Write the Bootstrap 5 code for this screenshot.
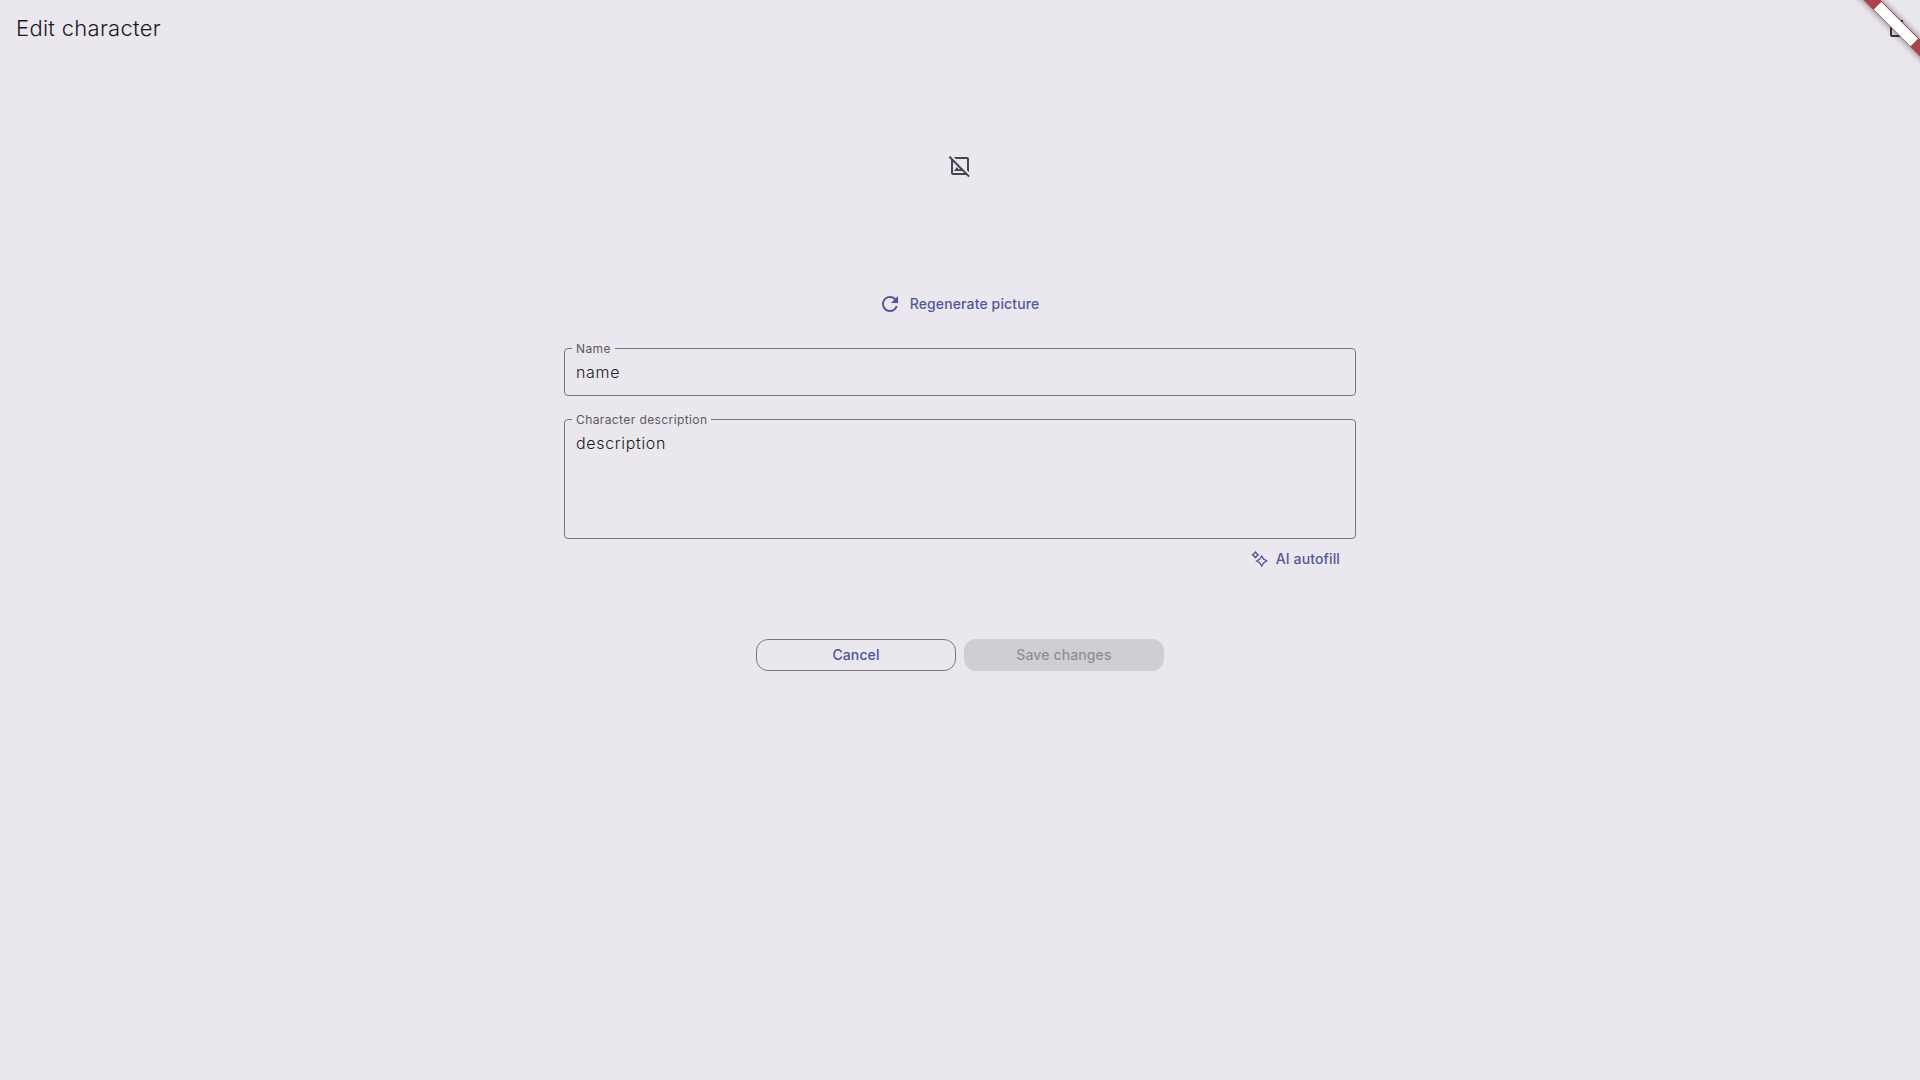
<!DOCTYPE html>
<html lang="en">
<head>
<meta charset="utf-8">
<title>Edit character</title>
<link href="https://cdn.jsdelivr.net/npm/bootstrap@5.3.0/dist/css/bootstrap.min.css" rel="stylesheet">
<style>
body{background:#eae7ee;color:#1b1b1f;font-family:Inter,"Liberation Sans",sans-serif;height:100vh}
.topbar{height:56px;padding:0 12px 0 16px}
.page-title{font-size:22px;font-weight:360;line-height:28px;letter-spacing:.29px}
.form-col{width:792px}
.portrait{height:220px}
.text-action{color:#54569c;font-size:14px;font-weight:480;letter-spacing:.13px;line-height:20px;padding:0;border:0;background:none}
.regen{margin-top:16px;padding-right:3px}
.autofill{margin-top:10px}
.outlined{border:1px solid #777680;border-radius:4px;position:relative}
.outlined label{position:absolute;left:7px;top:-8px;padding:0 4px;font-size:12px;line-height:16px;letter-spacing:.4px;color:#5a5962;background:#eae7ee}
.outlined .form-control{background:transparent;border:0;box-shadow:none;font-size:16px;font-weight:360;line-height:24px;letter-spacing:.66px;color:#1b1b1f;padding:11px;resize:none}
.name-field{height:48px;margin-top:32px}
.desc-field{height:120px;margin-top:23px}
.form-actions{margin-top:70px}
.pill{width:200px;height:32px;border-radius:12px;padding:0;font-size:14px;font-weight:480;letter-spacing:.12px;line-height:20px}
.pill-cancel,.pill-cancel:hover{color:#4f51a0;border:1px solid #777680}
.pill-save,.pill-save:disabled{color:#8f8d94;background:#d0cdd4;border:0;opacity:1}
.ribbon{position:absolute;top:0;right:0}
</style>
</head>
<body class="position-relative overflow-hidden">
<header class="topbar d-flex align-items-center justify-content-between">
<h1 class="page-title m-0">Edit character</h1>
<svg width="24" height="24" viewBox="0 0 24 24" fill="#36363e"><path d="M6 19c0 1.1.9 2 2 2h8c1.1 0 2-.9 2-2V7H6v12zM8 9h8v10H8V9zm7.5-5-1-1h-5l-1 1H5v2h14V4z"/></svg>
</header>
<main class="form-col mx-auto d-flex flex-column">
<div class="portrait d-flex align-items-center justify-content-center">
<svg width="24" height="24" viewBox="0 0 24 24" fill="#46464f"><path d="M21.9 21.9 2.1 2.1.69 3.51 3 5.83V19c0 1.1.9 2 2 2h13.17l2.31 2.31 1.42-1.41zM5 19V7.83l6.84 6.84-.84 1.05L9 13l-3 4h8.17l2 2H5zM7.83 5l-2-2H19c1.1 0 2 .9 2 2v13.17l-2-2V5H7.83z"/></svg>
</div>
<button class="text-action regen d-flex align-items-center justify-content-center gap-2 mx-auto">
<svg width="24" height="24" viewBox="0 0 24 24" fill="currentColor"><path d="M17.65 6.35A7.958 7.958 0 0 0 12 4a8 8 0 1 0 7.73 10h-2.08A5.99 5.99 0 0 1 12 18a6 6 0 1 1 4.22-10.22L13 11h7V4l-2.35 2.35z"/></svg>
<span>Regenerate picture</span></button>
<div class="outlined name-field"><label for="n">Name</label><input id="n" class="form-control" value="name"></div>
<div class="outlined desc-field"><label for="d">Character description</label><textarea id="d" class="form-control" rows="4">description</textarea></div>
<button class="text-action autofill d-flex align-items-center gap-2 ms-auto me-3">
<svg width="18" height="18" viewBox="0 0 18 18" fill="none" stroke="currentColor" stroke-width="1.4"><path d="M11.7 6 13.6 9.1 16.7 11 13.6 12.9 11.7 16 9.8 12.9 6.7 11 9.8 9.1zM5.4 2 6.7 3.5 8.2 4.8 6.7 6.1 5.4 7.6 4.1 6.1 2.6 4.8 4.1 3.5z"/></svg>
<span>AI autofill</span></button>
<div class="form-actions d-flex justify-content-center gap-2">
<button class="btn pill pill-cancel">Cancel</button>
<button class="btn pill pill-save" disabled>Save changes</button>
</div>
</main>
<svg class="ribbon" width="80" height="80" viewBox="0 0 80 80"><defs><filter id="s" x="-50%" y="-200%" width="200%" height="500%"><feGaussianBlur stdDeviation="3.5"/></filter></defs>
<g transform="translate(80 0) rotate(45)"><rect x="-60" y="28" width="120" height="12" fill="#000" opacity=".5" filter="url(#s)"/><rect x="-60" y="28" width="120" height="12" fill="#a94448"/><rect x="-26" y="28.8" width="52" height="10.6" fill="#fff"/></g></svg>
<script src="https://cdn.jsdelivr.net/npm/bootstrap@5.3.0/dist/js/bootstrap.bundle.min.js"></script>
</body>
</html>
